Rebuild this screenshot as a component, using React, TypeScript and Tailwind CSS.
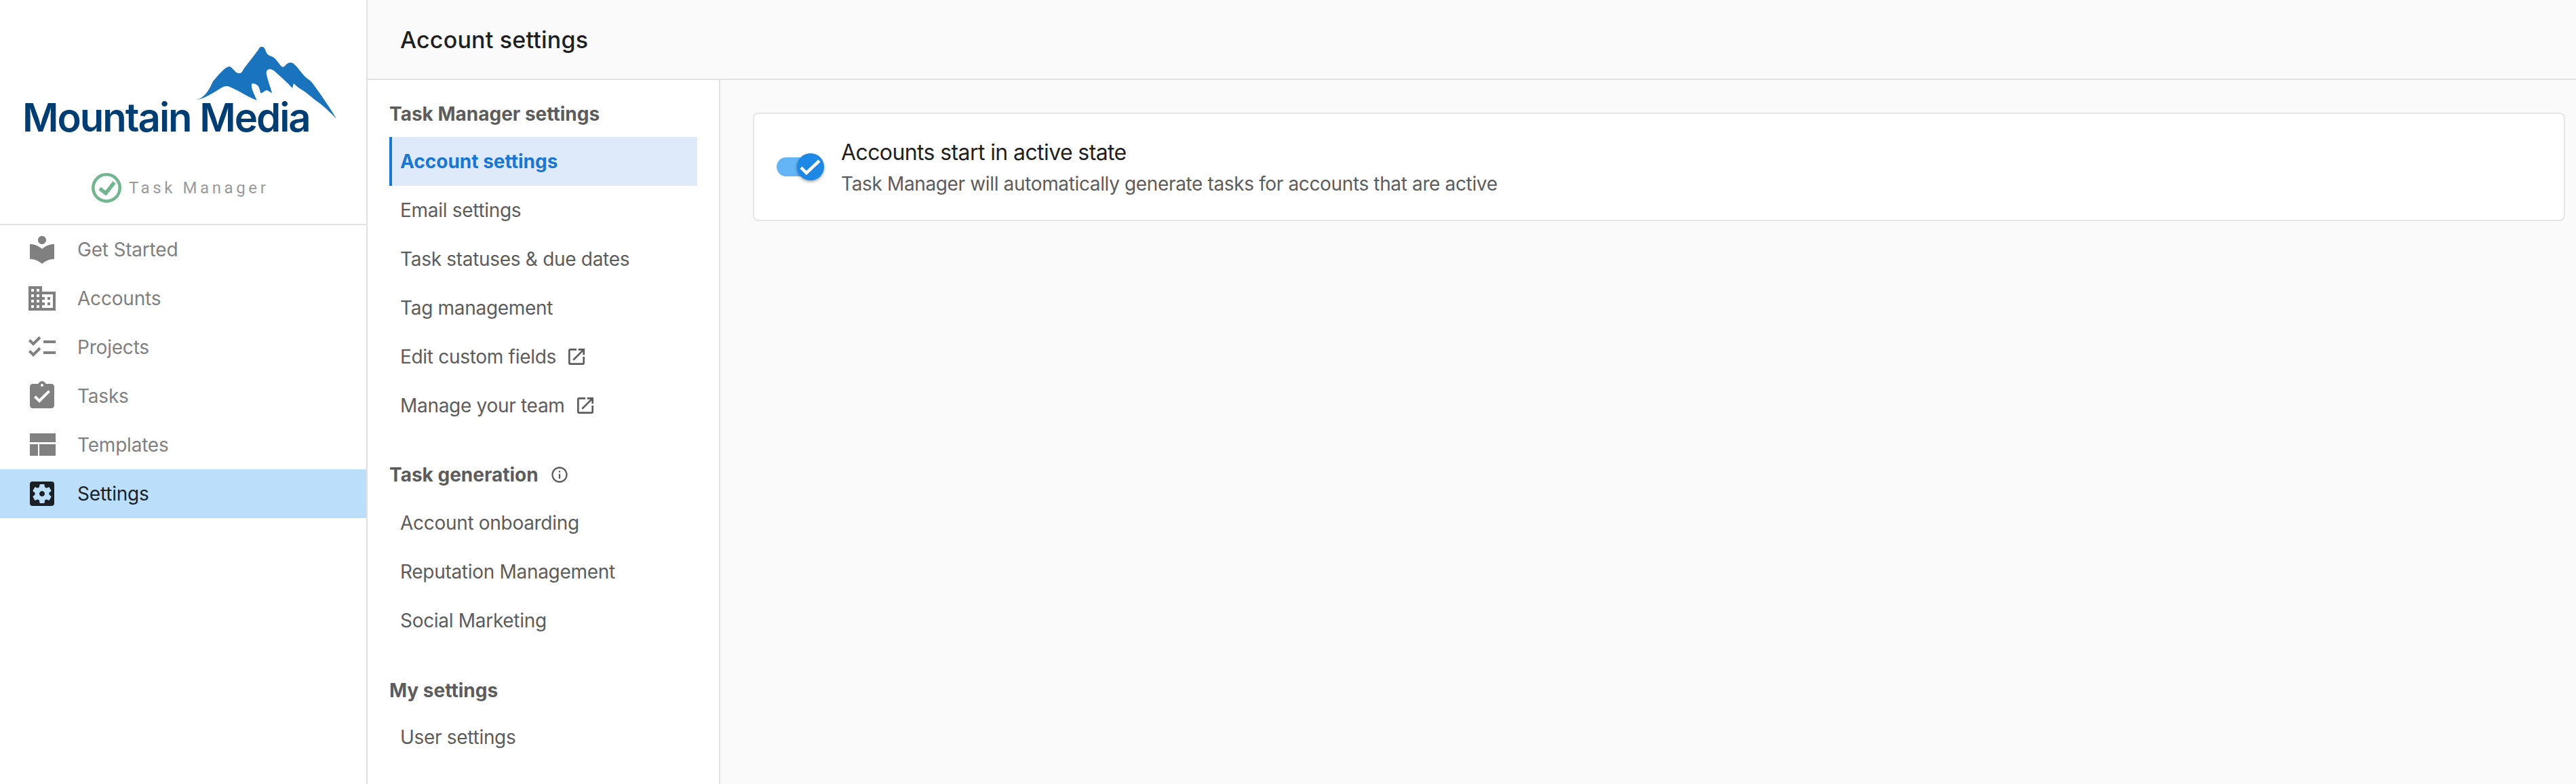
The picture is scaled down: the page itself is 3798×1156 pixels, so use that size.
import { MdAssignmentTurnedIn, MdChecklist, MdDomain, MdLocalLibrary, MdSettingsApplications, MdOpenInNew, MdInfoOutline } from "react-icons/md";

const navItems = [
  { label: "Get Started", icon: <MdLocalLibrary size={48} /> },
  { label: "Accounts", icon: <MdDomain size={48} /> },
  { label: "Projects", icon: <MdChecklist size={48} /> },
  { label: "Tasks", icon: <MdAssignmentTurnedIn size={48} /> },
  { label: "Templates", icon: <TemplatesIcon /> },
  { label: "Settings", icon: <MdSettingsApplications size={48} />, active: true },
];

function TemplatesIcon() {
  return (
    <svg width="48" height="48" viewBox="0 0 48 48" fill="currentColor">
      <rect x="6" y="7" width="38" height="13" />
      <rect x="6" y="23" width="12" height="17" />
      <rect x="20" y="23" width="24" height="17" />
    </svg>
  );
}

function Mountain() {
  return (
    <svg width="207" height="106" viewBox="289 69 207 106" fill="#1a73bd">
      <path d="M289.5 147 C298 145 305 140 314 120 C322 111 330 100 337.5 98 C343 98 346 108 352 108 C356 108 357 106 359 102 C368 90 378 78 383 70 C386 67 389 69 391 73 C393 80 396 82 400 83 C406 85 410 92 414 97 C417 100 419 99 422 95 C425 92 429 91 433 94 C440 100 446 110 452 115 C456 118 459 120 461 123 C472 138 486 158 496 175 C486 165 476 155 464 147 C457 141 451 136 446 133 C441 130 437 127 433 123 L431 130 C424 122 415 114 407 107 C403 103 400 102 398 102 C394 102 392 105 393 110 C395 120 399 129 401 137 C398 136 395 133 393 133 C389 134 387 138 384 137 C383 132 382 127 378.5 125 C375 123 371 122 371 125 C370 131 376 140 378.5 148 C365 143 350 132 336 127 C328 126 322 133 314 137 C306 142 298 146 289.5 147 Z" />
    </svg>
  );
}

function Section({ title, info, mt, mb, children }: { title: string; info?: boolean; mt: string; mb: string; children: React.ReactNode }) {
  return (
    <div className={mt}>
      <div className={`flex h-12 items-center gap-[17px] text-[28px] font-bold text-[#5c5c5c] ${mb}`}>
        {title}
        {info && <MdInfoOutline size={28} />}
      </div>
      {children}
    </div>
  );
}

function SubItem({ label, active, external }: { label: string; active?: boolean; external?: boolean }) {
  return (
    <div
      className={`flex h-[72px] items-center gap-[14px] border-l-4 pl-[12px] text-[28px] ${
        active
          ? "border-[#1976d2] bg-[#deeaf9] font-bold text-[#1976d2]"
          : "border-transparent tracking-[-0.3px] text-[#5c5c5c]"
      }`}
    >
      {label}
      {external && <MdOpenInNew size={32} />}
    </div>
  );
}

export default function App() {
  return (
    <div className="flex h-[1156px] w-[3798px] overflow-hidden bg-white font-['Inter',sans-serif]">
      <aside className="w-[542px] shrink-0 border-r-2 border-[#e2e2e2]">
        <div className="h-[332px] border-b-2 border-[#e2e2e2] pt-[69px]">
          <div className="pl-[289px]">
            <Mountain />
          </div>
          <div className="mt-[-37px] pl-[33px] text-[58px] leading-[70px] font-semibold tracking-[-2px] text-[#003d73]">Mountain Media</div>
          <div className="mt-[47px] flex items-center gap-[11px] pl-[135px]">
            <svg width="44" height="44" viewBox="0 0 44 44" fill="none">
              <circle cx="22" cy="22" r="19.75" stroke="#72b68f" strokeWidth="4.5" />
              <path d="M12 23 L21 30 L33.5 14" stroke="#72b68f" strokeWidth="5.5" />
            </svg>
            <span className="font-['Roboto',sans-serif] text-[24px] tracking-[4.6px] text-[#9a9a9a]">Task Manager</span>
          </div>
        </div>
        {navItems.map((item) => (
          <div
            key={item.label}
            className={`flex h-[72px] items-center gap-7 pl-[38px] text-[28px] tracking-[-0.2px] ${
              item.active ? "bg-[#bbdefb] text-[#1b2027]" : "text-[#808080]"
            }`}
          >
            {item.icon}
            {item.label}
          </div>
        ))}
      </aside>

      <div className="flex min-w-0 flex-1 flex-col bg-[#fafafa]">
        <header className="flex h-[118px] items-center border-b-2 border-[#e2e2e2] pl-[48px] text-[34px] font-medium tracking-[0.2px] text-[#1f1f1f]">
          Account settings
        </header>
        <div className="flex flex-1">
          <nav className="w-[520px] shrink-0 border-r-2 border-[#e2e2e2] bg-white pt-[26px] pr-[32px] pl-[32px]">
            <Section title="Task Manager settings" mt="" mb="mb-[10px]">
              <SubItem label="Account settings" active />
              <SubItem label="Email settings" />
              <SubItem label="Task statuses & due dates" />
              <SubItem label="Tag management" />
              <SubItem label="Edit custom fields" external />
              <SubItem label="Manage your team" external />
            </Section>
            <Section title="Task generation" info mt="mt-[42px]" mb="mb-[11px]">
              <SubItem label="Account onboarding" />
              <SubItem label="Reputation Management" />
              <SubItem label="Social Marketing" />
            </Section>
            <Section title="My settings" mt="mt-[43px]" mb="mb-[9px]">
              <SubItem label="User settings" />
            </Section>
          </nav>
          <main className="min-w-0 flex-1 pt-12 pr-4 pl-12">
            <div className="flex h-40 items-center rounded-lg border-2 border-[#e5e5e5] bg-white pl-[33px]">
              <div className="relative h-7 w-[66px] rounded-full bg-[#64b5f6]">
                <div className="absolute top-[-6px] right-[-4px] h-10 w-10 rounded-full bg-[#1e88e5] shadow-[0_2px_4px_rgba(0,0,0,0.35)]">
                  <svg width="40" height="40" viewBox="0 0 40 40" fill="none">
                    <path d="M6 21 L14 29 L33 11" stroke="white" strokeWidth="4.5" />
                  </svg>
                </div>
              </div>
              <div className="mt-1 ml-[29px]">
                <div className="text-[32px] leading-[46px] tracking-[-0.6px] text-[#1f1f1f]">Accounts start in active state</div>
                <div className="text-[28px] leading-[46px] tracking-[-0.36px] text-[#5c5c5c]">Task Manager will automatically generate tasks for accounts that are active</div>
              </div>
            </div>
          </main>
        </div>
      </div>
    </div>
  );
}
